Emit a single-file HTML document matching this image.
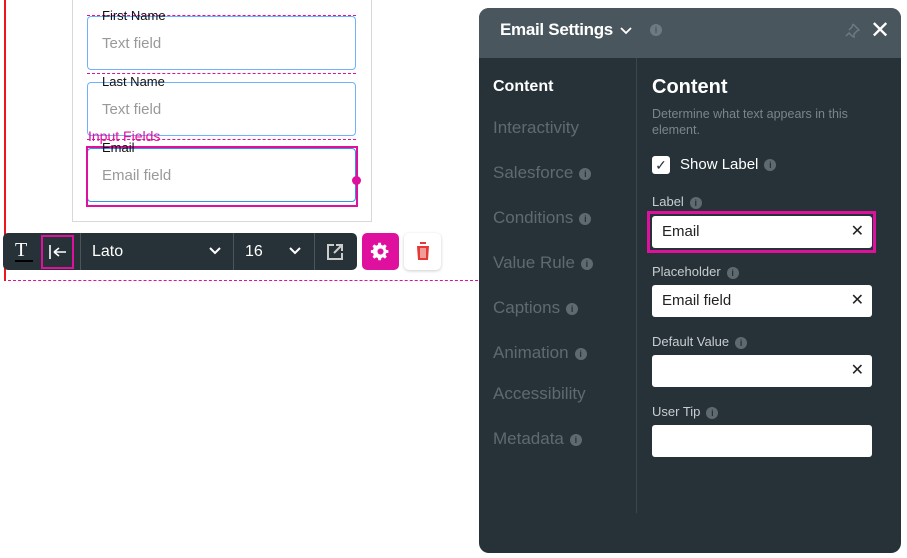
<html><head><style>
*{box-sizing:border-box;margin:0;padding:0}
body{width:907px;height:558px;background:#fff;position:relative;overflow:hidden;font-family:"Liberation Sans",sans-serif}
.a{position:absolute}
.fld{position:absolute;left:87px;width:269px;height:54px;border:1px solid #6fb0ff;border-radius:4px}
.ph{position:absolute;left:102px;font-size:15px;color:#999}
.lb{position:absolute;left:102px;font-size:13px;color:#111}
.nav{position:absolute;left:493px;font-size:17px;color:#5f6a70}
.i{display:inline-block;width:12px;height:12px;border-radius:50%;background:#5f6a70;color:#263238;font-size:9px;text-align:center;line-height:12px;font-weight:bold;vertical-align:middle;margin-left:6px}
.fl{position:absolute;left:652px;font-size:13px;color:#c8cdd0}
.in{position:absolute;left:652px;width:220px;height:32px;background:#fff;border-radius:3px;font-size:15px;color:#222;padding:7px 10px}
.x{position:absolute;right:8px;top:5px;font-size:16px;color:#222}
</style></head><body>
<div class="a" style="left:4px;top:0;width:2px;height:281px;background:#f0141e"></div>
<div class="a" style="left:8px;top:280px;width:470px;border-top:1px dashed #e0109f"></div>
<div class="a" style="left:72px;top:0;width:300px;height:222px;border:1px solid #d8d8d8;border-top:none"></div>
<div class="a" style="left:87px;top:15px;width:269px;border-top:1px dashed #e0109f"></div>
<div class="a" style="left:87px;top:73px;width:269px;border-top:1px dashed #e0109f"></div>
<div class="a" style="left:87px;top:139px;width:269px;border-top:1px dashed #e0109f"></div>
<div class="fld" style="top:16px"></div>
<div class="fld" style="top:82px"></div>
<div class="fld" style="top:148px;border-color:#3a8fe8"></div>
<div class="a" style="left:86px;top:146px;width:272px;height:61px;border:2px solid #e0109f"></div>
<div class="a" style="left:352px;top:176px;width:9px;height:9px;border-radius:50%;background:#e0109f"></div>
<div class="lb" style="top:8px">First Name</div>
<div class="ph" style="top:35px">Text field</div>
<div class="lb" style="top:74px">Last Name</div>
<div class="ph" style="top:101px">Text field</div>
<div class="a" style="left:88px;top:128px;font-size:14px;color:#e0109f">Input Fields</div>
<div class="lb" style="top:140px">Email</div>
<div class="ph" style="top:167px">Email field</div>
<div class="a" style="left:3px;top:233px;width:354px;height:37px;background:#263238;border-radius:5px"></div>
<div class="a" style="left:15px;top:239px;color:#fff;font-size:20px;font-family:'Liberation Serif',serif">T</div>
<div class="a" style="left:15px;top:260px;width:18px;height:2px;background:#000"></div>
<div class="a" style="left:41px;top:235px;width:33px;height:34px;border:2px solid #e0109f"></div>
<svg class="a" style="left:48px;top:244px" width="20" height="16"><path d="M2 1v14M6 8h12M6 8l5-4M6 8l5 4" stroke="#fff" stroke-width="1.6" fill="none"/></svg>
<div class="a" style="left:80px;top:233px;width:1px;height:37px;background:#4a555c"></div>
<div class="a" style="left:92px;top:243px;color:#fff;font-size:16px">Lato</div>
<div class="a" style="left:233px;top:233px;width:1px;height:37px;background:#4a555c"></div>
<div class="a" style="left:245px;top:243px;color:#fff;font-size:16px">16</div>
<div class="a" style="left:314px;top:233px;width:1px;height:37px;background:#4a555c"></div>
<svg class="a" style="left:206px;top:244px" width="110" height="14"><path d="M4 4l5 5 5-5M84 4l5 5 5-5" stroke="#fff" stroke-width="2" fill="none"/></svg>
<svg class="a" style="left:326px;top:243px" width="18" height="18"><path d="M8 2H2v14h14v-6M10 2h6v6M16 2L8 10" stroke="#ccc" stroke-width="2" fill="none"/></svg>
<div class="a" style="left:362px;top:233px;width:37px;height:37px;background:#e0109f;border-radius:5px"></div>
<svg class="a" style="left:370px;top:241px" width="21" height="21" viewBox="0 0 24 24"><path fill="#fff" fill-rule="evenodd" d="M12 8.5a3.5 3.5 0 100 7 3.5 3.5 0 000-7zm9 5v-3l-2.6-.5a7 7 0 00-.8-1.9l1.5-2.2-2.1-2.1-2.2 1.5a7 7 0 00-1.9-.8L12.5 2h-3l-.5 2.6a7 7 0 00-1.9.8L4.9 3.9 2.8 6l1.5 2.2a7 7 0 00-.8 1.9L1 10.5v3l2.6.5c.2.7.4 1.3.8 1.9l-1.5 2.2 2.1 2.1 2.2-1.5c.6.4 1.2.6 1.9.8l.4 2.5h3l.5-2.6c.7-.2 1.300-.4 1.9-.8l2.2 1.5 2.1-2.1-1.5-2.2c.4-.6.6-1.2.8-1.9z"/></svg>
<div class="a" style="left:404px;top:233px;width:37px;height:37px;background:#fff;border-radius:5px;box-shadow:0 1px 3px rgba(0,0,0,.2)"></div>
<svg class="a" style="left:414px;top:241px" width="18" height="20"><path d="M1 3h16M6 3V1h6v2M3 5h12l-1 14H4z" fill="#e53935"/><path d="M7 7v10M9 7v10M11 7v10" stroke="#fff" stroke-width="1"/></svg>
<div class="a" style="left:479px;top:8px;width:422px;height:545px;background:#263238;border-radius:10px;overflow:hidden">
<div style="height:50px;background:#4a565d"></div></div>
<div class="a" style="left:500px;top:20px;color:#fff;font-size:17px;font-weight:bold;letter-spacing:-0.3px">Email Settings</div>
<svg class="a" style="left:620px;top:27px" width="12" height="8"><path d="M1 1l5 5 5-5" stroke="#fff" stroke-width="1.8" fill="none"/></svg>
<span class="i a" style="left:644px;top:24px;background:#6e7a80;color:#4a565d">i</span>
<svg class="a" style="left:844px;top:23px" width="16" height="16"><path d="M9 1l6 6-2 1-3 3 0 3-2-1-3-3-3 3M5 7l3-3 1-3" stroke="#6e7a80" stroke-width="1.5" fill="none"/></svg>
<div class="a" style="left:870px;top:16px;color:#fff;font-size:24px">✕</div>
<div class="a" style="left:636px;top:58px;width:1px;height:455px;background:#3c474d"></div>
<div class="nav" style="top:78px;color:#fff;font-weight:bold;font-size:16px">Content</div>
<div class="nav" style="top:118px">Interactivity</div>
<div class="nav" style="top:163px">Salesforce<span class="i">i</span></div>
<div class="nav" style="top:208px">Conditions<span class="i">i</span></div>
<div class="nav" style="top:253px">Value Rule<span class="i">i</span></div>
<div class="nav" style="top:298px">Captions<span class="i">i</span></div>
<div class="nav" style="top:343px">Animation<span class="i">i</span></div>
<div class="nav" style="top:384px">Accessibility</div>
<div class="nav" style="top:429px">Metadata<span class="i">i</span></div>
<div class="a" style="left:652px;top:76px;color:#fff;font-size:20px;font-weight:bold">Content</div>
<div class="a" style="left:652px;top:106px;color:#7a858a;font-size:12.5px;line-height:16px;width:215px">Determine what text appears in this element.</div>
<div class="a" style="left:652px;top:156px;width:18px;height:18px;background:#fff;border-radius:3px;color:#263238;font-size:14px;text-align:center;line-height:18px">✓</div>
<div class="a" style="left:680px;top:156px;color:#fff;font-size:15px">Show Label<span class="i">i</span></div>
<div class="fl" style="top:194px">Label<span class="i">i</span></div>
<div class="a" style="left:647px;top:211px;width:229px;height:42px;border:3px solid #e0109f"></div>
<div class="in" style="top:216px">Email<span class="x">✕</span></div>
<div class="fl" style="top:264px">Placeholder<span class="i">i</span></div>
<div class="in" style="top:285px">Email field<span class="x">✕</span></div>
<div class="fl" style="top:334px">Default Value<span class="i">i</span></div>
<div class="in" style="top:355px"><span class="x">✕</span></div>
<div class="fl" style="top:404px">User Tip<span class="i">i</span></div>
<div class="in" style="top:425px"></div>
</body></html>
